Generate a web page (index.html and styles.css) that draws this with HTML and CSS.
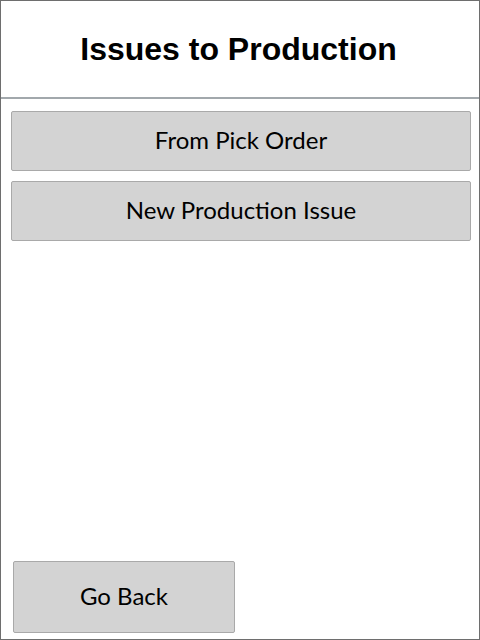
FILE: index.html
```html
<!DOCTYPE html>
<html>
<head>
<meta charset="utf-8">
<link rel="stylesheet" href="styles.css">
</head>
<body>
<div class="app">
  <header class="header">
    <h1 class="title">Issues to Production</h1>
  </header>
  <main class="menu">
    <button class="btn wide">From Pick Order</button>
    <button class="btn wide">New Production Issue</button>
  </main>
  <footer class="footer">
    <button class="btn back">Go Back</button>
  </footer>
</div>
</body>
</html>
```
FILE: styles.css
```css
html, body {
  margin: 0;
  padding: 0;
  background: #ffffff;
}
.app {
  width: 480px;
  height: 640px;
  box-sizing: border-box;
  border: 1px solid #6e6e6e;
  display: flex;
  flex-direction: column;
  background: #ffffff;
}
.header {
  height: 96px;
  border-bottom: 2px solid #a2a8ac;
  display: flex;
  align-items: center;
  justify-content: center;
}
.title {
  margin: 0 3px 0 0;
  font-family: "Liberation Sans", Arial, sans-serif;
  font-weight: bold;
  font-size: 32px;
  color: #000000;
}
.menu {
  flex: 1;
  display: flex;
  flex-direction: column;
  gap: 10px;
  padding: 12px 8px 0 10px;
}
.btn {
  background: #d3d3d3;
  border: 1px solid #a9a9a9;
  border-radius: 2px;
  font-family: Lato, "Open Sans", sans-serif;
  font-size: 24px;
  color: #000000;
  padding: 0 0 3px 0;
  margin: 0;
}
.wide {
  height: 60px;
  width: 100%;
}
.footer {
  padding: 0 0 6px 12px;
}
.back {
  width: 222px;
  height: 72px;
}
```
